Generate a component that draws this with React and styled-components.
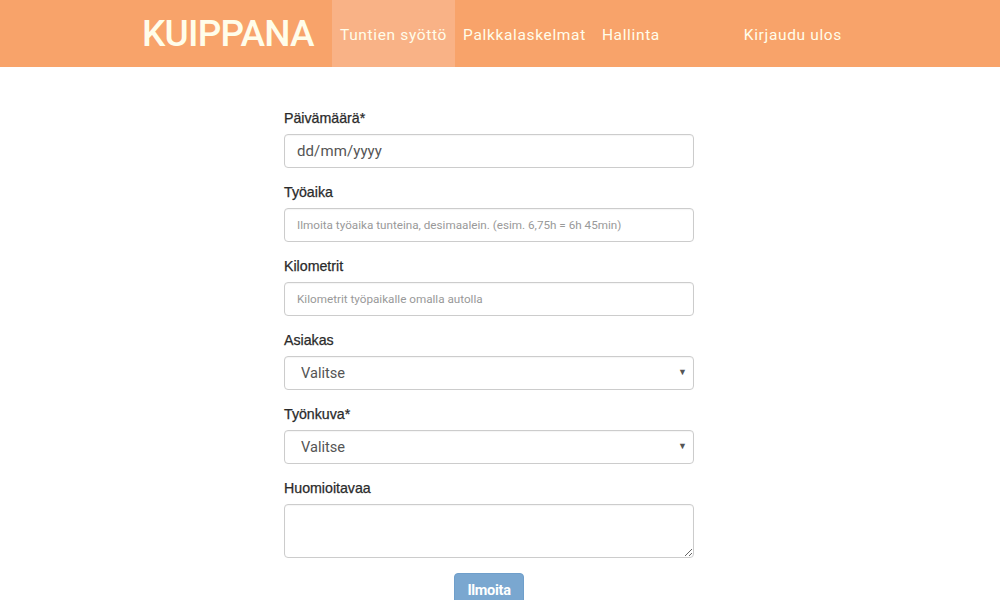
import styled, { createGlobalStyle } from "styled-components";

const GlobalStyle = createGlobalStyle`
    body {
        margin: 0;
        background: #fff;
        font-family: Roboto, "Liberation Sans", sans-serif;
    }
    * {
        box-sizing: border-box;
    }
`;

const App = () => {
    return (
        <>
            <GlobalStyle />
            <Navbar>
                <NavInner>
                    <Logo>KUIPPANA</Logo>
                    <NavLink active>Tuntien syöttö</NavLink>
                    <NavLink>Palkkalaskelmat</NavLink>
                    <NavLink>Hallinta</NavLink>
                    <NavLink right>Kirjaudu ulos</NavLink>
                </NavInner>
            </Navbar>
            <Main>
                <Form onSubmit={(e) => e.preventDefault()}>
                    <Group>
                        <Label>Päivämäärä*</Label>
                        <Input type="text" placeholder="dd/mm/yyyy" dateLike />
                    </Group>
                    <Group>
                        <Label>Työaika</Label>
                        <Input
                            type="text"
                            placeholder="Ilmoita työaika tunteina, desimaalein. (esim. 6,75h = 6h 45min)"
                        />
                    </Group>
                    <Group>
                        <Label>Kilometrit</Label>
                        <Input type="text" placeholder="Kilometrit työpaikalle omalla autolla" />
                    </Group>
                    <Group>
                        <Label>Asiakas</Label>
                        <SelectWrap>
                            <Select defaultValue="">
                                <option value="">Valitse</option>
                            </Select>
                            <Arrow>▼</Arrow>
                        </SelectWrap>
                    </Group>
                    <Group>
                        <Label>Työnkuva*</Label>
                        <SelectWrap>
                            <Select defaultValue="">
                                <option value="">Valitse</option>
                            </Select>
                            <Arrow>▼</Arrow>
                        </SelectWrap>
                    </Group>
                    <Group>
                        <Label>Huomioitavaa</Label>
                        <TextArea />
                    </Group>
                    <ButtonRow>
                        <Button type="submit" disabled>
                            Ilmoita
                        </Button>
                    </ButtonRow>
                </Form>
            </Main>
        </>
    );
};

const Navbar = styled.nav`
    background: #f8a36a;
    height: 67px;
`;

const NavInner = styled.div`
    width: 750px;
    margin: 0 auto;
    padding: 0 15px;
    height: 100%;
    display: flex;
    align-items: stretch;
`;

const Logo = styled.div`
    display: flex;
    align-items: center;
    padding: 0 19px 0 2px;
    font-size: 37px;
    font-weight: 500;
    letter-spacing: -0.8px;
    color: #fffdea;
    width: 192px;
`;

const NavLink = styled.a`
    display: flex;
    align-items: center;
    padding: 2px 8px 0;
    font-size: 15.5px;
    letter-spacing: 0.65px;
    color: #fffdea;
    cursor: pointer;
    background: ${(p) => (p.active ? "#f9b286" : "transparent")};
    margin-left: ${(p) => (p.right ? "auto" : "0")};
    margin-right: ${(p) => (p.right ? "10px" : "0")};
`;

const Main = styled.main`
    padding-top: 41px;
`;

const Form = styled.form`
    width: 410px;
    margin-left: calc(50% - 216px);
`;

const Group = styled.div`
    margin-bottom: 14px;
`;

const Label = styled.label`
    display: block;
    font-family: "Liberation Sans", Arial, sans-serif;
    font-size: 14.2px;
    line-height: 20px;
    font-weight: 400;
    color: #2a2a2a;
    margin-bottom: 6px;
    -webkit-text-stroke: 0.25px #2a2a2a;
`;

const fieldBase = `
    display: block;
    width: 100%;
    border: 1px solid #ccc;
    border-radius: 4px;
    background: #fff;
    font-family: Roboto, "Liberation Sans", sans-serif;
    color: #555;
    outline: none;
    box-shadow: inset 0 1px 1px rgba(0, 0, 0, 0.04);
`;

const Input = styled.input`
    ${fieldBase}
    height: 34px;
    padding: 0 12px;
    font-size: ${(p) => (p.dateLike ? "15px" : "11.7px")};
    &::placeholder {
        color: ${(p) => (p.dateLike ? "#555" : "#999")};
        letter-spacing: ${(p) => (p.dateLike ? "0.1px" : "0")};
    }
`;

const SelectWrap = styled.div`
    position: relative;
`;

const Select = styled.select`
    ${fieldBase}
    appearance: none;
    height: 34px;
    padding: 0 16px;
    font-size: 14.6px;
`;

const Arrow = styled.span`
    position: absolute;
    right: 7px;
    top: 11px;
    font-size: 9px;
    color: #555;
    pointer-events: none;
`;

const TextArea = styled.textarea`
    ${fieldBase}
    height: 54px;
    padding: 6px 12px;
    font-size: 14px;
    resize: vertical;
`;

const ButtonRow = styled.div`
    display: flex;
    justify-content: center;
    padding-top: 1px;
`;

const Button = styled.button`
    width: 70px;
    height: 34px;
    border: 1px solid #6f9fcb;
    border-radius: 4px;
    background: #7aa7d0;
    color: #fff;
    font-family: Roboto, "Liberation Sans", sans-serif;
    font-size: 14.5px;
    font-weight: 700;
    letter-spacing: -0.3px;
`;

export default App;
